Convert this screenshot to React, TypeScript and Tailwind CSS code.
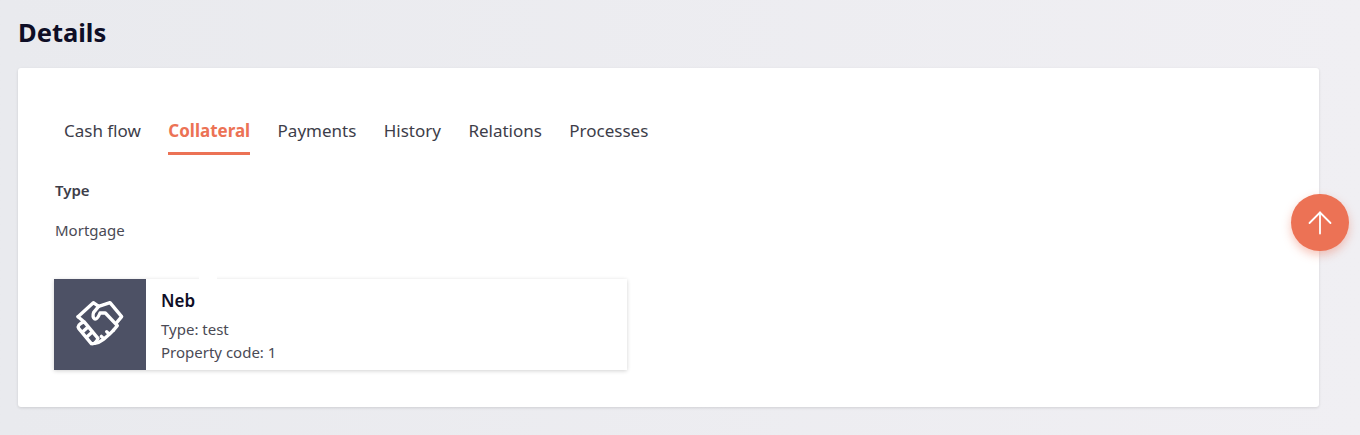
import { ArrowUp } from 'lucide-react';

const tabs = ['Cash flow', 'Collateral', 'Payments', 'History', 'Relations', 'Processes'];

function HandshakeIcon() {
  return (
    <svg viewBox="0 0 240 240" className="h-[80px] w-[80px]" fill="none" stroke="white" strokeWidth="10" strokeLinecap="round" strokeLinejoin="round">
      {/* cuffs and top of the hands */}
      <path d="M54 95 L100 53 L116 64 L150 53 L185 95 L170 113" />
      {/* thumb */}
      <path d="M116 64 L101 82 Q96 96 104 102 Q112 104 120 84 L136 84 L172 122 L160 136" />
      {/* left wrist and finger band */}
      <path d="M54 95 L72 110 L114 160 Q106 178 94 176 L56 130 Q50 120 72 110" />
      <path d="M68 140 L84 126 M81 155 L97 141" />
      {/* fingers on the right */}
      <path d="M160 136 L148 148 L140 140 M148 148 L132 162 L124 154 M132 162 L116 172 L104 175" />
    </svg>
  );
}

export default function App() {
  return (
    <div className="relative h-[435px] overflow-hidden bg-linear-to-r from-[#e9eaee] to-[#f0eff3] pl-[18px] pr-[41px] pt-[14px] font-['Noto_Sans',sans-serif]">
      <h1 className="h-[36px] text-[25.5px] leading-[36px] font-bold text-[#0e0e26]">Details</h1>
      <div className="mt-[18px] h-[339px] rounded-[3px] bg-white px-[36px] pt-[46px] shadow-[0_1px_3px_rgba(0,0,0,0.12)]">
        <div className="flex gap-[27.4px] pl-[10px]">
          {tabs.map((tab) => (
            <div
              key={tab}
              className={
                tab === 'Collateral'
                  ? 'h-[41px] border-b-[3px] border-[#ec7255] text-[17px] leading-[34px] font-bold text-[#ec7255]'
                  : 'h-[41px] text-[17px] leading-[34px] text-[#3d3d49]'
              }
            >
              {tab}
            </div>
          ))}
        </div>
        <div className="mt-[25px] pl-px text-[15px] leading-[20px] font-semibold text-[#3d3d49]">Type</div>
        <div className="mt-[20px] pl-px text-[15px] leading-[20px] text-[#4a4a55]">Mortgage</div>
        <div className="relative mt-[39px] flex h-[91px] w-[573px] bg-white shadow-[0_1px_4px_rgba(0,0,0,0.18)]">
          <div className="absolute left-[145px] top-[-3px] h-[3px] w-[18px] bg-white" />
          <div className="flex w-[92px] items-center justify-center bg-[#4d5165]">
            <HandshakeIcon />
          </div>
          <div className="pl-[15px] pt-[10px]">
            <div className="text-[17px] leading-[24px] font-semibold text-[#0e0e26]">Neb</div>
            <div className="mt-[4px] text-[15px] leading-[24px] text-[#4a4a55]">Type: test</div>
            <div className="text-[15px] leading-[23px] text-[#4a4a55]">Property code: 1</div>
          </div>
        </div>
      </div>
      <button className="absolute left-[1291px] top-[194px] flex h-[57px] w-[58px] items-center justify-center rounded-full bg-[#ec7255] shadow-[0_4px_10px_rgba(236,112,84,0.4)]">
        <ArrowUp className="h-[36px] w-[36px] text-white" strokeWidth={1.2} />
      </button>
    </div>
  );
}
